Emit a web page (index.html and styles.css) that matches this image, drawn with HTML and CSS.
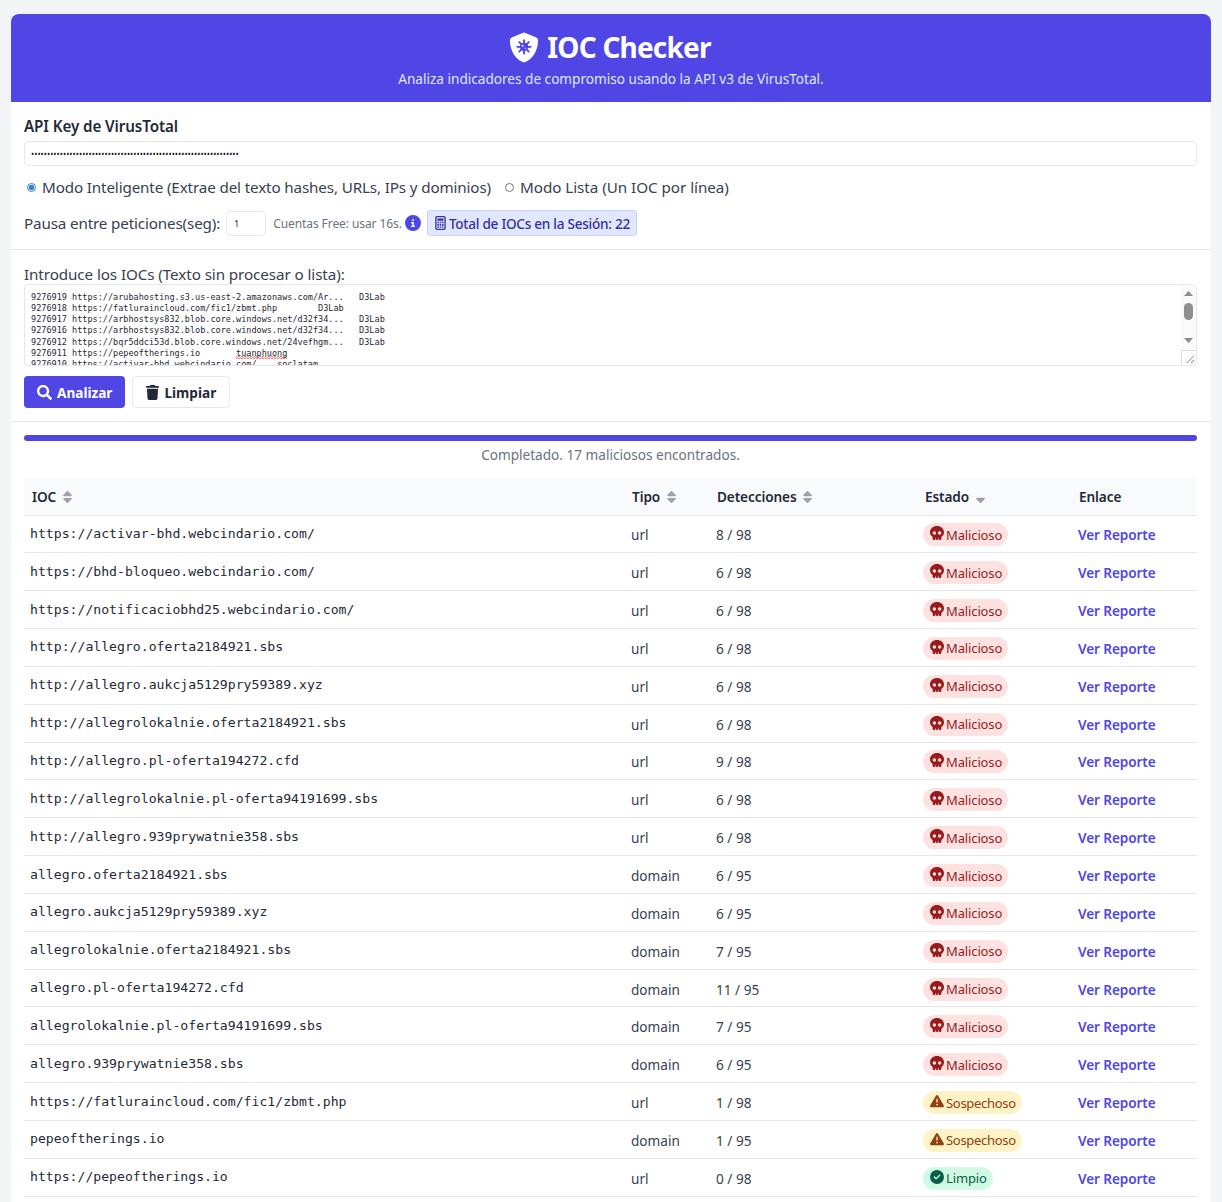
FILE: index.html
```html
<!DOCTYPE html>
<html lang="es">
<head>
<meta charset="utf-8">
<title>IOC Checker</title>
<link rel="stylesheet" href="styles.css">
</head>
<body>
<svg class="sprite" width="0" height="0" aria-hidden="true">
  <symbol id="i-sort" viewBox="0 0 320 512"><path d="M137.4 41.4c12.5-12.5 32.8-12.5 45.3 0l128 128c9.2 9.2 11.9 22.9 6.9 34.9s-16.6 19.8-29.6 19.8H32c-12.9 0-24.6-7.8-29.6-19.8s-2.7-25.7 6.9-34.9l128-128zm0 429.3l-128-128c-9.2-9.2-11.9-22.9-6.9-34.9s16.6-19.8 29.6-19.8H288c12.9 0 24.6 7.8 29.6 19.8s2.7 25.7-6.9 34.9l-128 128c-12.5 12.5-32.8 12.5-45.3 0z"/></symbol>
  <symbol id="i-sort-down" viewBox="0 0 320 512"><path d="M137.4 470.6l-128-128c-9.2-9.2-11.9-22.9-6.9-34.9s16.6-19.8 29.6-19.8H288c12.9 0 24.6 7.8 29.6 19.8s2.7 25.7-6.9 34.9l-128 128c-12.5 12.5-32.8 12.5-45.3 0z"/></symbol>
  <symbol id="i-skull" viewBox="0 0 512 512"><path d="M416 398.9c58.5-41.1 96-104.1 96-174.9C512 100.3 397.4 0 256 0S0 100.3 0 224c0 70.7 37.5 133.8 96 174.9c0 .4 0 .7 0 1.1v64c0 26.5 21.5 48 48 48h48V464c0-8.8 7.2-16 16-16s16 7.2 16 16v48h64V464c0-8.8 7.2-16 16-16s16 7.2 16 16v48h48c26.5 0 48-21.5 48-48V400c0-.4 0-.7 0-1.1zM96 256a64 64 0 1 1 128 0 64 64 0 1 1 -128 0zm256-64a64 64 0 1 1 0 128 64 64 0 1 1 0-128z"/></symbol>
  <symbol id="i-warn" viewBox="0 0 512 512"><path d="M256 32c14.2 0 27.3 7.5 34.5 19.8l216 368c7.3 12.4 7.3 27.7 .2 40.1S486.3 480 472 480H40c-14.3 0-27.6-7.7-34.7-20.1s-7-27.8 .2-40.1l216-368C228.7 39.5 241.8 32 256 32zm0 128c-13.3 0-24 10.7-24 24V296c0 13.3 10.7 24 24 24s24-10.7 24-24V184c0-13.3-10.7-24-24-24zm32 224a32 32 0 1 0 -64 0 32 32 0 1 0 64 0z"/></symbol>
  <symbol id="i-check" viewBox="0 0 512 512"><path d="M256 512A256 256 0 1 0 256 0a256 256 0 1 0 0 512zM369 209L241 337c-9.4 9.4-24.6 9.4-33.9 0l-64-64c-9.4-9.4-9.4-24.6 0-33.9s24.6-9.4 33.9 0l47 47L335 175c9.4-9.4 24.6-9.4 33.9 0s9.4 24.6 0 33.9z"/></symbol>
</svg>
<main class="card">
  <header class="hero">
    <h1 class="hero-title">
      <svg class="hero-icon" viewBox="0 0 512 512"><path fill="#fff" d="M269.4 2.9C265.2 1 260.7 0 256 0s-9.2 1-13.4 2.9L54.3 82.8c-22 9.3-38.4 31-38.3 57.2c.5 99.2 41.3 280.7 213.6 363.2c16.7 8 36.1 8 52.8 0C454.7 420.7 495.5 239.2 496 140c.1-26.2-16.3-47.9-38.3-57.2L269.4 2.9z"/><g fill="none" stroke="#4f46e5" stroke-width="32" stroke-linecap="round"><path d="M256 130v230M141 245h230M175 164l162 162M337 164L175 326"/></g><circle cx="256" cy="245" r="72" fill="#4f46e5"/><circle cx="232" cy="226" r="16" fill="#fff"/><circle cx="278" cy="266" r="12" fill="#fff"/></svg>
      IOC Checker
    </h1>
    <p class="hero-sub">Analiza indicadores de compromiso usando la API v3 de VirusTotal.</p>
  </header>

  <section class="config">
    <label class="field-label" for="key">API Key de VirusTotal</label>
    <input class="key-input" id="key" type="password" value="abcdefghijklmnopqrstuvwxyzabcdefghijklmnopqrstuvwxyzabcdefghijklm">
    <div class="modes">
      <label class="mode"><input class="radio" type="radio" name="mode" checked>Modo Inteligente (Extrae del texto hashes, URLs, IPs y dominios)</label>
      <label class="mode mode-list"><input class="radio" type="radio" name="mode">Modo Lista (Un IOC por línea)</label>
    </div>
    <div class="pause">
      <label for="pause">Pausa entre peticiones(seg):</label>
      <input class="pause-input" id="pause" type="text" value="1">
      <span class="pause-hint">Cuentas Free: usar 16s.</span>
      <svg class="info" viewBox="0 0 512 512"><path d="M256 512A256 256 0 1 0 256 0a256 256 0 1 0 0 512zM216 336h24V272H216c-13.3 0-24-10.7-24-24s10.7-24 24-24h48c13.3 0 24 10.7 24 24v88h8c13.3 0 24 10.7 24 24s-10.7 24-24 24H216c-13.3 0-24-10.7-24-24s10.7-24 24-24zm40-208a32 32 0 1 1 0 64 32 32 0 1 1 0-64z"/></svg>
      <span class="session">
        <svg class="calc" viewBox="0 0 384 512"><path fill-rule="evenodd" d="M64 0h256c35 0 64 29 64 64v384c0 35-29 64-64 64H64c-35 0-64-29-64-64V64C0 29 29 0 64 0zm-16 64v384c0 9 7 16 16 16h256c9 0 16-7 16-16V64c0-9-7-16-16-16H64c-9 0-16 7-16 16z"/><path d="M80 88h224v88H80zM80 208h56v56H80zM164 208h56v56h-56zM248 208h56v56h-56zM80 296h56v56H80zM164 296h56v56h-56zM248 296h56v56h-56zM80 384h56v48H80zM164 384h56v48h-56zM248 384h56v48h-56z"/></svg>Total de IOCs en la Sesión: 22
      </span>
    </div>
  </section>

  <section class="input-area">
    <label class="ioc-label">Introduce los IOCs (Texto sin procesar o lista):</label>
    <div class="ioc-box">
      <div class="ioc-text" role="textbox" aria-multiline="true">9276919 https://arubahosting.s3.us-east-2.amazonaws.com/Ar...   D3Lab
9276918 https://fatluraincloud.com/fic1/zbmt.php        D3Lab
9276917 https://arbhostsys832.blob.core.windows.net/d32f34...   D3Lab
9276916 https://arbhostsys832.blob.core.windows.net/d32f34...   D3Lab
9276912 https://bqr5ddci53d.blob.core.windows.net/24vefhgm...   D3Lab
9276911 https://pepeoftherings.io       <span class="typo">tuanphuong</span>
9276910 https://activar-bhd.webcindario.com/    soclatam</div>
      <div class="scrollbar" aria-hidden="true">
        <span class="arrow arrow-up"></span>
        <span class="thumb"></span>
        <span class="arrow arrow-down"></span>
        <span class="grip"><svg viewBox="0 0 15 15"><path d="M13 5L5 13M13 9.5L9.5 13" stroke="#777" stroke-width="1" fill="none"/></svg></span>
      </div>
    </div>
    <div class="actions">
      <button class="btn btn-primary" type="button"><svg class="btn-icon" viewBox="0 0 512 512"><path d="M505 442.7L405.3 343c-4.5-4.5-10.6-7-17-7H372c27.6-35.3 44-79.7 44-128C416 93.1 322.9 0 208 0S0 93.1 0 208s93.1 208 208 208c48.3 0 92.7-16.4 128-44v16.3c0 6.4 2.5 12.5 7 17l99.7 99.7c9.4 9.4 24.6 9.4 33.9 0l28.3-28.3c9.4-9.4 9.4-24.6.1-34zM208 336c-70.7 0-128-57.2-128-128 0-70.7 57.2-128 128-128 70.7 0 128 57.2 128 128 0 70.7-57.2 128-128 128z"/></svg>Analizar</button>
      <button class="btn btn-light" type="button"><svg class="btn-icon trash" viewBox="0 0 448 512"><path d="M135.2 17.7L128 32H32C14.3 32 0 46.3 0 64S14.3 96 32 96H416c17.7 0 32-14.3 32-32s-14.3-32-32-32H320l-7.2-14.3C307.4 6.8 296.3 0 284.2 0H163.8c-12.1 0-23.2 6.8-28.6 17.7zM416 128H32L53.2 467c1.6 25.3 22.6 45 47.9 45H346.9c25.3 0 46.3-19.7 47.9-45L416 128z"/></svg>Limpiar</button>
    </div>
  </section>

  <section class="results">
    <div class="progress"></div>
    <p class="progress-text">Completado. 17 maliciosos encontrados.</p>
    <table class="ioc-table">
      <colgroup><col class="c1"><col class="c2"><col class="c3"><col class="c4"><col class="c5"></colgroup>
      <thead>
        <tr>
          <th>IOC <svg class="sort"><use href="#i-sort"/></svg></th>
          <th>Tipo <svg class="sort"><use href="#i-sort"/></svg></th>
          <th>Detecciones <svg class="sort"><use href="#i-sort"/></svg></th>
          <th>Estado <svg class="sort"><use href="#i-sort-down"/></svg></th>
          <th>Enlace</th>
        </tr>
      </thead>
      <tbody id="rows">
        <tr><td class="ioc">https://activar-bhd.webcindario.com/</td><td>url</td><td>8 / 98</td><td><span class="badge bad"><svg><use href="#i-skull"/></svg>Malicioso</span></td><td><a href="#">Ver Reporte</a></td></tr>
        <tr><td class="ioc">https://bhd-bloqueo.webcindario.com/</td><td>url</td><td>6 / 98</td><td><span class="badge bad"><svg><use href="#i-skull"/></svg>Malicioso</span></td><td><a href="#">Ver Reporte</a></td></tr>
        <tr><td class="ioc">https://notificaciobhd25.webcindario.com/</td><td>url</td><td>6 / 98</td><td><span class="badge bad"><svg><use href="#i-skull"/></svg>Malicioso</span></td><td><a href="#">Ver Reporte</a></td></tr>
        <tr><td class="ioc">http://allegro.oferta2184921.sbs</td><td>url</td><td>6 / 98</td><td><span class="badge bad"><svg><use href="#i-skull"/></svg>Malicioso</span></td><td><a href="#">Ver Reporte</a></td></tr>
        <tr><td class="ioc">http://allegro.aukcja5129pry59389.xyz</td><td>url</td><td>6 / 98</td><td><span class="badge bad"><svg><use href="#i-skull"/></svg>Malicioso</span></td><td><a href="#">Ver Reporte</a></td></tr>
        <tr><td class="ioc">http://allegrolokalnie.oferta2184921.sbs</td><td>url</td><td>6 / 98</td><td><span class="badge bad"><svg><use href="#i-skull"/></svg>Malicioso</span></td><td><a href="#">Ver Reporte</a></td></tr>
        <tr><td class="ioc">http://allegro.pl-oferta194272.cfd</td><td>url</td><td>9 / 98</td><td><span class="badge bad"><svg><use href="#i-skull"/></svg>Malicioso</span></td><td><a href="#">Ver Reporte</a></td></tr>
        <tr><td class="ioc">http://allegrolokalnie.pl-oferta94191699.sbs</td><td>url</td><td>6 / 98</td><td><span class="badge bad"><svg><use href="#i-skull"/></svg>Malicioso</span></td><td><a href="#">Ver Reporte</a></td></tr>
        <tr><td class="ioc">http://allegro.939prywatnie358.sbs</td><td>url</td><td>6 / 98</td><td><span class="badge bad"><svg><use href="#i-skull"/></svg>Malicioso</span></td><td><a href="#">Ver Reporte</a></td></tr>
        <tr><td class="ioc">allegro.oferta2184921.sbs</td><td>domain</td><td>6 / 95</td><td><span class="badge bad"><svg><use href="#i-skull"/></svg>Malicioso</span></td><td><a href="#">Ver Reporte</a></td></tr>
        <tr><td class="ioc">allegro.aukcja5129pry59389.xyz</td><td>domain</td><td>6 / 95</td><td><span class="badge bad"><svg><use href="#i-skull"/></svg>Malicioso</span></td><td><a href="#">Ver Reporte</a></td></tr>
        <tr><td class="ioc">allegrolokalnie.oferta2184921.sbs</td><td>domain</td><td>7 / 95</td><td><span class="badge bad"><svg><use href="#i-skull"/></svg>Malicioso</span></td><td><a href="#">Ver Reporte</a></td></tr>
        <tr><td class="ioc">allegro.pl-oferta194272.cfd</td><td>domain</td><td>11 / 95</td><td><span class="badge bad"><svg><use href="#i-skull"/></svg>Malicioso</span></td><td><a href="#">Ver Reporte</a></td></tr>
        <tr><td class="ioc">allegrolokalnie.pl-oferta94191699.sbs</td><td>domain</td><td>7 / 95</td><td><span class="badge bad"><svg><use href="#i-skull"/></svg>Malicioso</span></td><td><a href="#">Ver Reporte</a></td></tr>
        <tr><td class="ioc">allegro.939prywatnie358.sbs</td><td>domain</td><td>6 / 95</td><td><span class="badge bad"><svg><use href="#i-skull"/></svg>Malicioso</span></td><td><a href="#">Ver Reporte</a></td></tr>
        <tr><td class="ioc">https://fatluraincloud.com/fic1/zbmt.php</td><td>url</td><td>1 / 98</td><td><span class="badge warn"><svg><use href="#i-warn"/></svg>Sospechoso</span></td><td><a href="#">Ver Reporte</a></td></tr>
        <tr><td class="ioc">pepeoftherings.io</td><td>domain</td><td>1 / 95</td><td><span class="badge warn"><svg><use href="#i-warn"/></svg>Sospechoso</span></td><td><a href="#">Ver Reporte</a></td></tr>
        <tr><td class="ioc">https://pepeoftherings.io</td><td>url</td><td>0 / 98</td><td><span class="badge ok"><svg><use href="#i-check"/></svg>Limpio</span></td><td><a href="#">Ver Reporte</a></td></tr>
      </tbody>
    </table>
  </section>
</main>
</body>
</html>
```
FILE: styles.css
```css
* { box-sizing: border-box; }
html, body { height: 100%; }
body {
  margin: 0;
  padding: 14px 11px 0;
  background: #f3f4f6;
  color: #1f2937;
  font-family: "Noto Sans", "Liberation Sans", sans-serif;
  font-size: 14px;
  overflow: hidden;
}
.sprite { position: absolute; }
.card {
  width: 1200px;
  min-height: 1188px;
  background: #fff;
  border-radius: 8px 8px 0 0;
  overflow: hidden;
}
.hero {
  height: 88px;
  background: #4f46e5;
  color: #fff;
  text-align: center;
  padding-top: 15px;
}
.hero-title {
  margin: 0 2px 0 0;
  display: flex;
  justify-content: center;
  align-items: center;
  gap: 8px;
  font-size: 28px;
  line-height: 36px;
  font-weight: 700;
  letter-spacing: -0.8px;
}
.hero-icon { width: 30px; height: 31px; }
.hero-sub {
  margin: 4px 0 0;
  font-size: 13.6px;
  line-height: 20px;
  color: #e0e7ff;
}
.config {
  padding: 14px 14px 13px 13px;
  border-bottom: 1px solid #e5e7eb;
}
.field-label {
  display: block;
  font-size: 15.2px;
  line-height: 21px;
  font-weight: 600;
  letter-spacing: -0.1px;
  color: #1f2937;
}
.key-input {
  display: block;
  width: 100%;
  height: 25px;
  margin-top: 4px;
  padding: 0 6px;
  border: 1px solid #e5e7eb;
  border-radius: 4px;
  font-size: 8.5px;
  font-family: "Noto Sans", sans-serif;
  color: #111827;
  background: #fff;
}
.modes {
  display: flex;
  gap: 11px;
  margin-top: 10px;
  font-size: 15.2px;
  line-height: 22px;
  letter-spacing: -0.13px;
  color: #374151;
}
.mode { display: flex; align-items: center; }
.mode-list { letter-spacing: -0.03px; }
.radio {
  width: 9px;
  height: 9px;
  margin: 0 6px 0 3px;
  accent-color: #3b82c4;
}
.pause {
  display: flex;
  align-items: center;
  margin-top: 12px;
  height: 26px;
  font-size: 15.2px;
  letter-spacing: -0.14px;
  color: #374151;
}
.pause-input {
  width: 40px;
  height: 25px;
  margin-left: 6px;
  padding: 0 7px;
  border: 1px solid #e5e7eb;
  border-radius: 4px;
  font-size: 8.5px;
  font-family: "Noto Sans", sans-serif;
  color: #111827;
}
.pause-hint {
  margin-left: 7px;
  font-size: 12px;
  letter-spacing: -0.08px;
  color: #6b7280;
}
.info { width: 16px; height: 16px; margin-left: 3px; fill: #4f46e5; }
.session {
  display: flex;
  align-items: center;
  height: 26px;
  margin-left: 6px;
  padding: 0 6px 0 7px;
  background: #e0e7ff;
  border: 1px solid #c7d2fe;
  border-radius: 3px;
  color: #3730a3;
  font-size: 13.6px;
  font-weight: 500;
  letter-spacing: -0.27px;
}
.calc { width: 11px; height: 14px; margin-right: 3px; fill: #3730a3; }
.input-area {
  padding: 14px 14px 13px 13px;
  border-bottom: 1px solid #e5e7eb;
}
.ioc-label {
  display: block;
  font-size: 15.2px;
  line-height: 20px;
  letter-spacing: -0.08px;
  color: #374151;
}
.ioc-box {
  position: relative;
  height: 82px;
  border: 1px solid #e5e7eb;
  border-radius: 4px;
  overflow: hidden;
}
.ioc-text {
  height: 100%;
  padding: 7px 6px 0;
  font-family: "DejaVu Sans Mono", monospace;
  font-size: 8.52px;
  line-height: 11.15px;
  color: #1f2937;
  white-space: pre;
  overflow: hidden;
}
.typo {
  padding-bottom: 1px;
  background-image:
    linear-gradient(45deg, transparent 35%, #f08080 35%, #f08080 65%, transparent 65%),
    linear-gradient(-45deg, transparent 35%, #f08080 35%, #f08080 65%, transparent 65%);
  background-size: 3px 3px;
  background-repeat: repeat-x;
  background-position: left bottom;
}
.scrollbar {
  position: absolute;
  top: 0;
  right: 0;
  bottom: 0;
  width: 15px;
  background: #fafafa;
}
.arrow {
  position: absolute;
  left: 3px;
  width: 9px;
  height: 5px;
  background: #8a8a8a;
}
.arrow-up { top: 6px; clip-path: polygon(50% 0, 100% 100%, 0 100%); }
.arrow-down { top: 53px; clip-path: polygon(0 0, 100% 0, 50% 100%); }
.thumb {
  position: absolute;
  top: 18px;
  left: 3px;
  width: 9px;
  height: 17px;
  background: #8f8f8f;
  border-radius: 5px;
}
.grip {
  position: absolute;
  right: 0;
  bottom: 0;
  width: 15px;
  height: 15px;
  background: #fff;
  border-top: 1px solid #dcdcdc;
  border-left: 1px solid #dcdcdc;
}
.grip svg { display: block; width: 14px; height: 14px; }
.actions { display: flex; gap: 7px; margin-top: 10px; }
.btn {
  display: inline-flex;
  align-items: center;
  height: 32px;
  padding: 0 13px;
  border-radius: 4px;
  font-family: "Noto Sans", sans-serif;
  font-size: 13.6px;
  font-weight: 700;
}
.btn-primary { background: #4f46e5; border: 0; color: #fff; }
.btn-light { background: #fff; border: 1px solid #e5e7eb; color: #1f2937; }
.btn-icon { width: 15px; height: 15px; margin-right: 5px; fill: currentColor; }
.trash { width: 13px; height: 15px; }
.results { padding: 13px 14px 0 13px; }
.progress { height: 6px; background: #4f46e5; border-radius: 3px; }
.progress-text {
  margin: 4px 0 13px;
  text-align: center;
  font-size: 13.6px;
  line-height: 20px;
  color: #6b7280;
}
.ioc-table {
  width: 1173px;
  table-layout: fixed;
  border-collapse: collapse;
  font-size: 13.6px;
}
.c1 { width: 600px; }
.c2 { width: 85px; }
.c3 { width: 208px; }
.c4 { width: 154px; }
.c5 { width: 126px; }
.ioc-table th {
  height: 37px;
  padding: 0 0 0 8px;
  background: #f9fafb;
  border-bottom: 1px solid #e5e7eb;
  text-align: left;
  font-size: 13.6px;
  font-weight: 600;
  letter-spacing: -0.1px;
  color: #1f2937;
}
.sort { width: 9px; height: 14px; margin-left: 3px; vertical-align: -2px; fill: #9ca3af; }
.ioc-table td {
  height: 37.85px;
  padding: 2px 0 0 7px;
  border-bottom: 1px solid #e5e7eb;
  color: #374151;
}
.ioc-table td.ioc {
  padding: 0 0 1px 6px;
  font-family: "DejaVu Sans Mono", monospace;
  font-size: 13.15px;
  color: #1f2937;
}
.ioc-table a { color: #4f46e5; text-decoration: none; font-weight: 600; letter-spacing: -0.1px; }
.badge {
  display: inline-flex;
  align-items: center;
  height: 23px;
  margin-left: -1px;
  padding: 0 6px 0 7px;
  border-radius: 12px;
  font-size: 13px;
  letter-spacing: -0.13px;
}
.badge svg { width: 14px; height: 14px; margin: -3px 2px 0 0; fill: currentColor; }
.bad { background: #fee2e2; color: #991b1b; }
.warn { background: #fef3c7; color: #92400e; letter-spacing: -0.3px; }
.ok { background: #d1fae5; color: #065f46; }
```
